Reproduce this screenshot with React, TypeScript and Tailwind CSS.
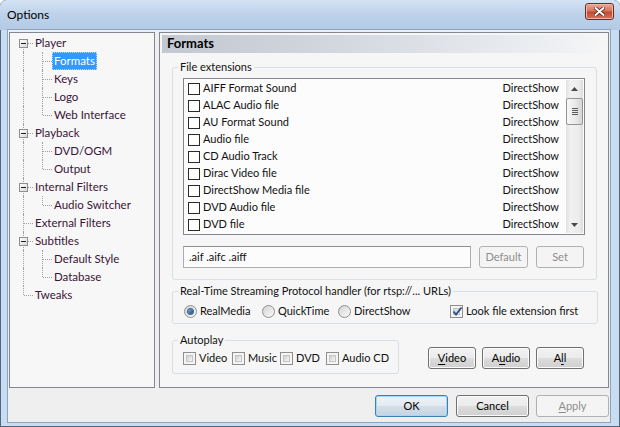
import React from "react";

type TreeItem = {
  label: string;
  child?: boolean;
  expander?: boolean;
  first?: boolean;
  last?: boolean;
  lastChild?: boolean;
  selected?: boolean;
};

const treeItems: TreeItem[] = [
  { label: "Player", expander: true, first: true },
  { label: "Formats", child: true, selected: true },
  { label: "Keys", child: true },
  { label: "Logo", child: true },
  { label: "Web Interface", child: true, lastChild: true },
  { label: "Playback", expander: true },
  { label: "DVD/OGM", child: true },
  { label: "Output", child: true, lastChild: true },
  { label: "Internal Filters", expander: true },
  { label: "Audio Switcher", child: true, lastChild: true },
  { label: "External Filters" },
  { label: "Subtitles", expander: true },
  { label: "Default Style", child: true },
  { label: "Database", child: true, lastChild: true },
  { label: "Tweaks", last: true },
];

const formats = [
  "AIFF Format Sound",
  "ALAC Audio file",
  "AU Format Sound",
  "Audio file",
  "CD Audio Track",
  "Dirac Video file",
  "DirectShow Media file",
  "DVD Audio file",
  "DVD file",
];

function Gutter({
  vertical,
  horizontal,
  expander,
}: {
  vertical: "full" | "top" | "bottom";
  horizontal?: boolean;
  expander?: boolean;
}) {
  return (
    <div className="relative w-[19px] h-[18px] shrink-0">
      {vertical === "full" && (
        <div className="absolute left-[9px] top-0 bottom-0 border-l border-dotted border-[#a0a0a0]" />
      )}
      {vertical === "top" && (
        <div className="absolute left-[9px] top-0 h-[9px] border-l border-dotted border-[#a0a0a0]" />
      )}
      {vertical === "bottom" && (
        <div className="absolute left-[9px] top-[9px] bottom-0 border-l border-dotted border-[#a0a0a0]" />
      )}
      {horizontal && (
        <div className="absolute left-[10px] right-0 top-[9px] border-t border-dotted border-[#a0a0a0]" />
      )}
      {expander && (
        <div className="absolute left-[5px] top-[5px] w-[9px] h-[9px] border border-[#8f8f8f] bg-[linear-gradient(135deg,#ffffff,#d8d8d8)] flex items-center justify-center">
          <div className="w-[5px] h-px bg-[#1e1e1e]" />
        </div>
      )}
    </div>
  );
}

function ListCheck() {
  return <div className="w-[12px] h-[12px] shrink-0 border border-[#2a2a2a] bg-white" />;
}

function VistaCheck({ checked }: { checked?: boolean }) {
  return (
    <div className="w-[13px] h-[13px] shrink-0 border border-[#8f8f8f] bg-[#f4f4f4] p-[2px]">
      <div className="w-full h-full border border-[#c5c5c5] bg-[linear-gradient(135deg,#cfcfcf,#f6f6f6)] relative">
        {checked && (
          <svg className="absolute -left-[2px] -top-[3px]" width="11" height="11" viewBox="0 0 11 11">
            <path d="M1.5 5.5 L4 8.5 L9.5 1.5" fill="none" stroke="#2b4d86" strokeWidth="1.8" />
          </svg>
        )}
      </div>
    </div>
  );
}

function Radio({ checked }: { checked?: boolean }) {
  return (
    <div className="w-[13px] h-[13px] shrink-0 rounded-full border border-[#8e8f8f] bg-[linear-gradient(135deg,#d2d2d2,#fbfbfb)] flex items-center justify-center">
      {checked && (
        <div className="w-[5px] h-[5px] rounded-full bg-[radial-gradient(circle_at_35%_35%,#6b97c4,#163a63)] shadow-[0_0_0_1px_#3d6a97]" />
      )}
    </div>
  );
}

function Button({
  children,
  className,
  disabled,
  primary,
}: {
  children: React.ReactNode;
  className: string;
  disabled?: boolean;
  primary?: boolean;
}) {
  let look =
    "border-[#707070] bg-[linear-gradient(#f2f2f2_0%,#ebebeb_49%,#dddddd_50%,#cfcfcf_100%)] shadow-[inset_0_0_0_1px_#fbfbfb] text-black";
  if (primary)
    look =
      "border-[#3c7fb1] bg-[linear-gradient(#eef3f7_0%,#e3eaf0_49%,#d3dee8_50%,#c6d4e1_100%)] shadow-[inset_0_0_0_1px_#a9d6f3] text-black";
  if (disabled) look = "border-[#adb2b5] bg-[#f4f4f4] text-[#8d8d8d]";
  return (
    <div className={`h-[22px] shrink-0 rounded-[3px] border flex items-center justify-center ${look} ${className}`}>
      {children}
    </div>
  );
}

function Scrollbar() {
  return (
    <div className="w-[17px] h-full shrink-0 flex flex-col bg-[linear-gradient(to_right,#e1e1e1,#f1f1f1_25%,#ececec_75%,#dcdcdc)]">
      <div className="h-[17px] flex items-center justify-center">
        <svg width="7" height="4" viewBox="0 0 7 4">
          <path d="M0 4 L3.5 0 L7 4 Z" fill="#4a4a4a" />
        </svg>
      </div>
      <div className="mt-[1px] h-[27px] rounded-[2px] border border-[#959595] bg-[linear-gradient(to_right,#f7f7f7,#ebebeb_50%,#d5d5d5)] flex flex-col items-center justify-center gap-[1px]">
        <div className="w-[6px] h-px bg-[#5c5c5c]" />
        <div className="w-[6px] h-px bg-[#5c5c5c]" />
        <div className="w-[6px] h-px bg-[#5c5c5c]" />
        <div className="w-[6px] h-px bg-[#5c5c5c]" />
      </div>
      <div className="flex-1" />
      <div className="h-[17px] flex items-center justify-center">
        <svg width="7" height="4" viewBox="0 0 7 4">
          <path d="M0 0 L3.5 4 L7 0 Z" fill="#4a4a4a" />
        </svg>
      </div>
    </div>
  );
}

export default function App() {
  return (
    <div className="w-[620px] h-[427px] flex flex-col bg-[#c9dcf1] rounded-t-[6px] shadow-[inset_0_0_0_1px_#52677f] font-['Segoe_UI',Lato,sans-serif] text-[11px] text-[#111] overflow-hidden">
      {/* title bar */}
      <div className="h-[30px] shrink-0 flex items-center justify-between pl-[7px] pr-[6px] rounded-t-[6px] bg-[linear-gradient(#d4e3f4,#bed3ea_45%,#b3cae4)]">
        <span className="text-[12px] text-black">Options</span>
        <div className="w-[29px] h-[17px] -mt-[8px] rounded-[3px] border border-[#6e2a20] bg-[linear-gradient(#e9aa9c,#d7745f_45%,#c24a33_55%,#d4745d)] flex items-center justify-center shadow-[inset_0_0_0_1px_#f0b8ab]">
          <svg width="11" height="9" viewBox="0 0 11 9">
            <path d="M1.5 1 L9.5 8 M9.5 1 L1.5 8" stroke="#4a1a12" strokeWidth="3.4" strokeLinecap="round" />
            <path d="M1.5 1 L9.5 8 M9.5 1 L1.5 8" stroke="#ffffff" strokeWidth="2" strokeLinecap="round" />
          </svg>
        </div>
      </div>

      <div className="flex flex-1">
        <div className="w-[8px] shrink-0" />
        {/* client area */}
        <div className="w-[602px] h-[392px] bg-[#efefef] shadow-[0_0_0_1px_#8aa5c3] flex flex-col pl-[1px] pt-[2px]">
          <div className="flex gap-[4px]">
            {/* tree */}
            <div className="w-[146px] h-[356px] border border-[#828790] bg-[#f7f7f7] pt-[1px] pl-[4px] text-[11.5px]">
              {treeItems.map((t) => (
                <div key={t.label} className="flex h-[18px] items-center leading-[18px]">
                  <Gutter
                    vertical={t.child ? "full" : t.first ? "bottom" : t.last ? "top" : "full"}
                    horizontal={!t.child}
                    expander={t.expander}
                  />
                  {t.child && <Gutter vertical={t.lastChild ? "top" : "full"} horizontal />}
                  {t.selected ? (
                    <div className="h-full px-[1px] border border-dotted border-[#b8dcff] bg-[#3399ff] text-white leading-[16px] whitespace-nowrap">
                      {t.label}
                    </div>
                  ) : (
                    <div className="px-[2px] text-[#3a1436] whitespace-nowrap">{t.label}</div>
                  )}
                </div>
              ))}
            </div>

            {/* right panel */}
            <div className="w-[450px] h-[356px] border border-[#828790] bg-[#f6f6f6] flex flex-col">
              <div className="mx-[2px] mt-[2px] h-[18px] flex items-center pl-[5px] bg-[linear-gradient(to_right,#c3c8d1,#d3d8df_40%,#eef0f3_90%,#f6f6f6)]">
                <span className="font-bold text-[13px] text-black">Formats</span>
              </div>

              <fieldset className="ml-[12px] mt-[7px] w-[425px] border border-[#d5dfe5] rounded-[3px] pl-[5px] pb-[11px]">
                <legend className="px-[2px] leading-[14px]">File extensions</legend>
                <div className="ml-[5px] mt-[4px] w-[402px] h-[157px] border border-[#828790] bg-[#fcfcfc] flex p-[1px]">
                  <div className="flex-1 flex flex-col">
                    {formats.map((f) => (
                      <div key={f} className="h-[17px] flex items-center pl-[3px] pr-[7px]">
                        <ListCheck />
                        <span className="ml-[3px] flex-1 whitespace-nowrap">{f}</span>
                        <span>DirectShow</span>
                      </div>
                    ))}
                  </div>
                  <Scrollbar />
                </div>
                <div className="ml-[5px] mt-[11px] flex items-center">
                  <div className="w-[288px] h-[22px] border border-[#abadb3] border-t-[#8e8f8f] bg-[#fcfcfc] flex items-center pl-[5px]">
                    .aif .aifc .aiff
                  </div>
                  <Button disabled className="ml-[8px] w-[49px]">
                    Default
                  </Button>
                  <Button disabled className="ml-[8px] w-[48px]">
                    Set
                  </Button>
                </div>
              </fieldset>

              <fieldset className="ml-[12px] mt-[4px] w-[426px] border border-[#d5dfe5] rounded-[3px] pl-[5px] pb-[4px]">
                <legend className="px-[2px] leading-[14px]">Real-Time Streaming Protocol handler (for rtsp://... URLs)</legend>
                <div className="mt-[5px] ml-[6px] h-[16px] flex items-center">
                  <div className="w-[78px] flex items-center">
                    <Radio checked />
                    <span className="ml-[3px]">RealMedia</span>
                  </div>
                  <div className="w-[76px] flex items-center">
                    <Radio />
                    <span className="ml-[3px]">QuickTime</span>
                  </div>
                  <div className="w-[112px] flex items-center">
                    <Radio />
                    <span className="ml-[3px]">DirectShow</span>
                  </div>
                  <div className="flex items-center">
                    <VistaCheck checked />
                    <span className="ml-[3px]">Look file extension first</span>
                  </div>
                </div>
              </fieldset>

              <div className="ml-[12px] mt-[9px] flex items-start">
                <fieldset className="w-[227px] border border-[#d5dfe5] rounded-[3px] pl-[5px] pb-[7px]">
                  <legend className="px-[2px] leading-[14px]">Autoplay</legend>
                  <div className="mt-[3px] ml-[5px] h-[16px] flex items-center">
                    <div className="w-[49px] flex items-center">
                      <VistaCheck />
                      <span className="ml-[3px]">Video</span>
                    </div>
                    <div className="w-[48px] flex items-center">
                      <VistaCheck />
                      <span className="ml-[3px]">Music</span>
                    </div>
                    <div className="w-[46px] flex items-center">
                      <VistaCheck />
                      <span className="ml-[3px]">DVD</span>
                    </div>
                    <div className="flex items-center">
                      <VistaCheck />
                      <span className="ml-[3px]">Audio CD</span>
                    </div>
                  </div>
                </fieldset>
                <Button className="ml-[29px] mt-[14px] w-[48px]">
                  <span className="underline underline-offset-2">V</span>ideo
                </Button>
                <Button className="ml-[6px] mt-[14px] w-[48px]">
                  A<span className="underline underline-offset-2">u</span>dio
                </Button>
                <Button className="ml-[6px] mt-[14px] w-[48px]">
                  A<span className="underline underline-offset-2">l</span>l
                </Button>
              </div>
            </div>
          </div>

          {/* dialog buttons */}
          <div className="mt-[7px] flex justify-end pr-[1px]">
            <Button primary className="w-[73px]">
              OK
            </Button>
            <Button className="ml-[8px] w-[73px]">Cancel</Button>
            <Button disabled className="ml-[7px] w-[73px]">
              <span className="underline underline-offset-2">A</span>pply
            </Button>
          </div>
        </div>
        <div className="flex-1" />
      </div>
      <div className="h-[5px] shrink-0" />
    </div>
  );
}
